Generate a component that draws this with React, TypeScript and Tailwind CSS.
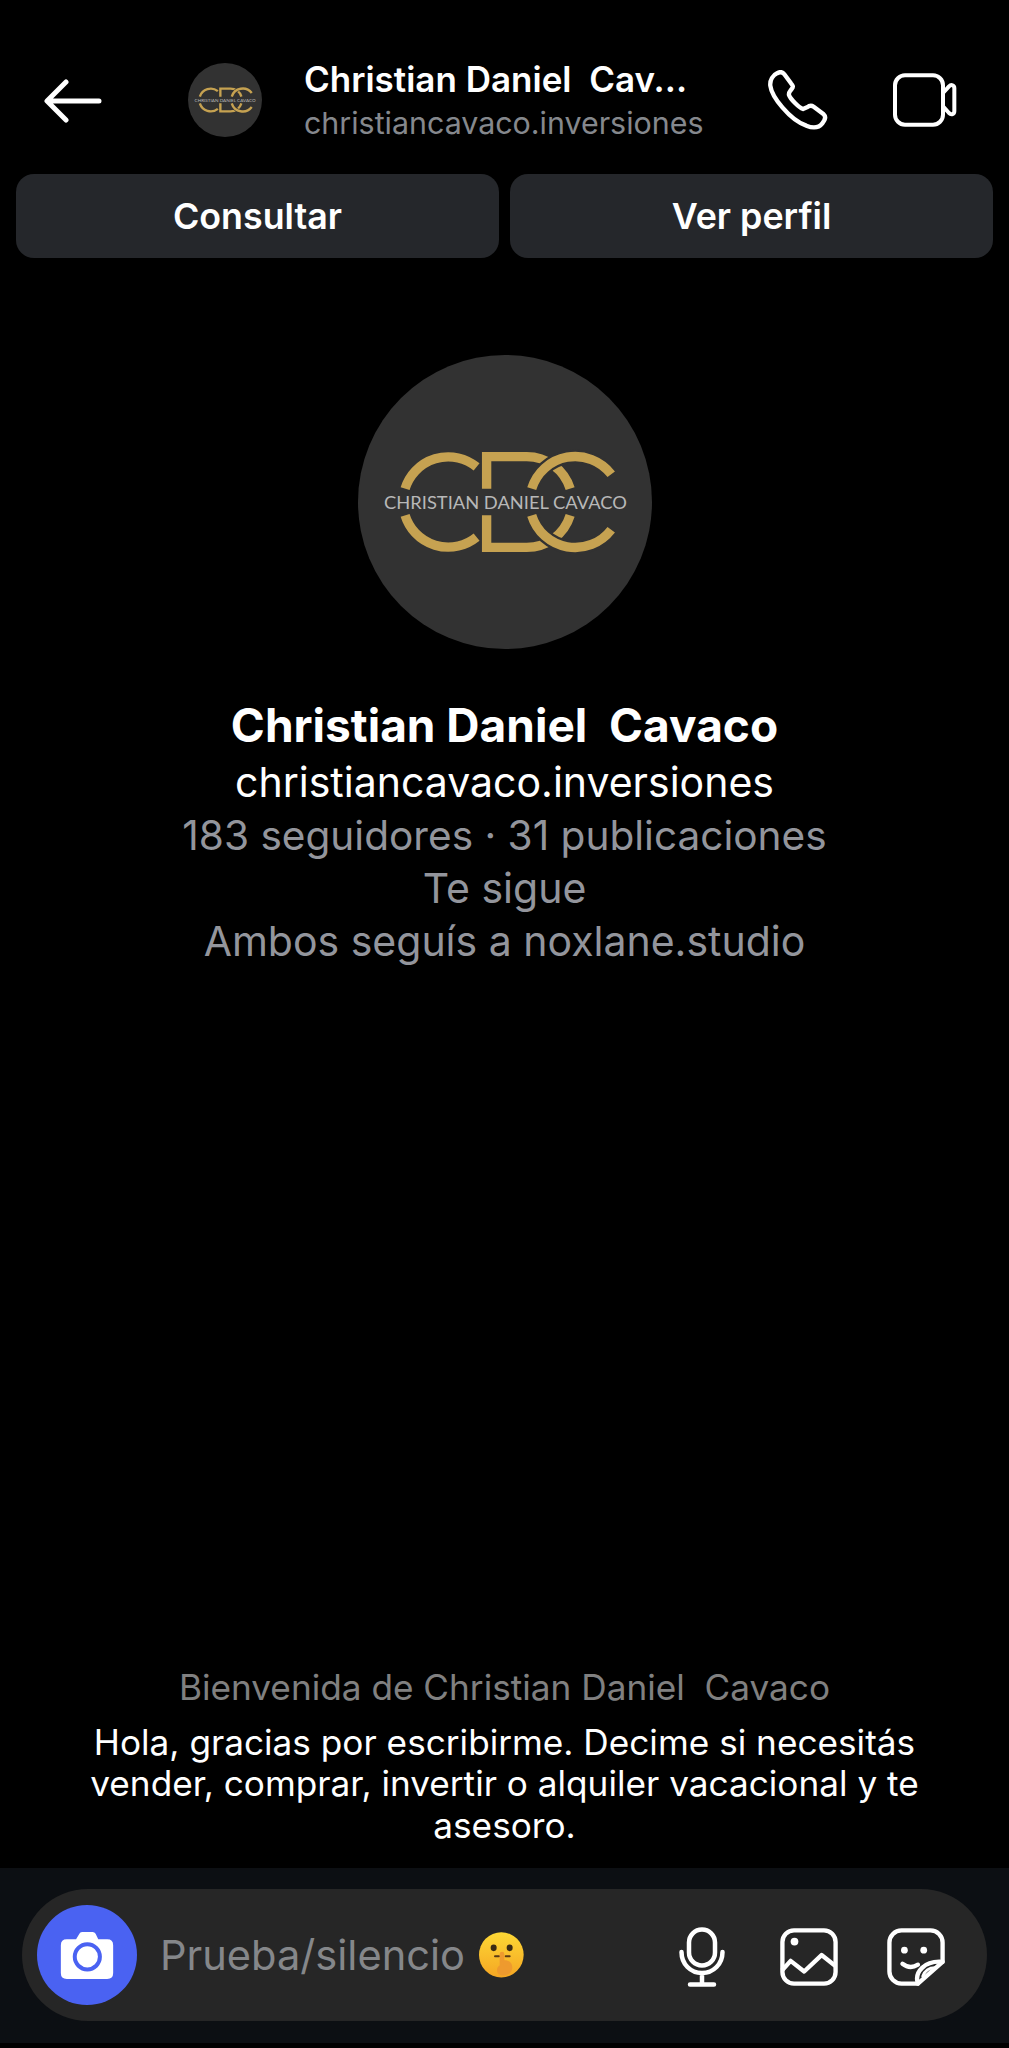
const Logo = ({ className }: { className: string }) => (
  <svg viewBox="50 45 880 880" className={className}>
    <circle cx="490" cy="485" r="440" fill="#323232" />
    <g fill="none" stroke="#c6a251" strokeWidth="28">
      <path d="M191 445A135 135 0 0 1 405 380M191 525A135 135 0 0 0 405 590" />
      <path d="M435 445V349H555A136 136 0 0 1 685 445M435 525V621H555A136 136 0 0 0 685 525" />
      <path d="M570 445A136 136 0 0 1 808 402M570 525A136 136 0 0 0 808 568" stroke="#323232" strokeWidth="42" />
      <path d="M570 445A136 136 0 0 1 808 402M570 525A136 136 0 0 0 808 568" />
    </g>
    <text x="128" y="505" fill="#b8b8b8" fontSize="53" textLength="727" lengthAdjust="spacingAndGlyphs" fontFamily="Lato, sans-serif">CHRISTIAN DANIEL CAVACO</text>
  </svg>
)

export default function App() {
  return (
    <div className="flex h-[2048px] flex-col bg-black font-['Inter',sans-serif] text-white">
      <header className="flex h-[174px] items-start pl-[44px] pt-[63px]">
        <svg viewBox="0 0 58 44" className="mt-[16px] h-[44px] w-[58px]" fill="none" stroke="white" strokeWidth="5" strokeLinecap="round" strokeLinejoin="round">
          <path d="M55 22H4M22 3 3 22l19 19" />
        </svg>
        <Logo className="ml-[86px] h-[74px] w-[74px]" />
        <div className="-mt-[4px] ml-[42px] w-[400px]">
          <div className="whitespace-pre text-[35px] leading-[40px] font-semibold">Christian Daniel  Cav...</div>
          <div className="mt-[5px] whitespace-pre text-[30.4px] leading-[38px] text-[#85888d]">christiancavaco.inversiones</div>
        </div>
        <svg viewBox="55 45 180 180" className="mt-[7px] ml-[64px] h-[60px] w-[60px]" fill="none" stroke="white" strokeWidth="13" strokeLinejoin="round">
          <path d="M82 55C70 60 60 75 62 92C66 125 120 195 170 212C190 220 208 218 218 205C226 195 230 185 222 178L192 155C185 150 178 152 172 157L160 162C148 158 122 132 118 120C116 112 122 108 126 102C132 95 130 92 124 85L104 58C98 50 90 50 82 55Z" />
        </svg>
        <svg viewBox="425 52 195 165" className="mt-[9px] ml-[64px] h-[55px] w-[65px]" fill="none" stroke="white" strokeWidth="12" strokeLinejoin="round">
          <rect x="434" y="62" width="144" height="148" rx="30" />
          <path d="M578 115L596 95C603 88 612 92 612 100V170C612 178 603 182 596 175L578 155" />
        </svg>
      </header>

      <div className="flex gap-[11px] pl-[16px] pr-[16px]">
        <button className="h-[84px] flex-1 rounded-[18px] bg-[#25272b] pt-[2px] text-[35.8px] font-semibold">Consultar</button>
        <button className="h-[84px] flex-1 rounded-[18px] bg-[#25272b] pt-[2px] text-[35.8px] font-semibold">Ver perfil</button>
      </div>

      <main className="flex flex-1 flex-col items-center text-center">
        <Logo className="mt-[97px] h-[294px] w-[294px]" />
        <h1 className="mt-[46px] whitespace-pre text-[46px] leading-[61px] font-bold">Christian Daniel  Cavaco</h1>
        <p className="text-[41px] leading-[53px]">christiancavaco.inversiones</p>
        <p className="text-[40.6px] leading-[53px] text-[#93959c]">183 seguidores · 31 publicaciones</p>
        <p className="text-[41px] leading-[53px] text-[#93959c]">Te sigue</p>
        <p className="text-[41px] leading-[53px] text-[#93959c]">Ambos seguís a noxlane.studio</p>
        <div className="mt-auto mb-[22px] w-full px-[80px]">
          <p className="whitespace-pre text-[35.2px] leading-[40px] text-[#808080]">Bienvenida de Christian Daniel  Cavaco</p>
          <p className="mt-[15px] text-[35.2px] leading-[41.5px]">Hola, gracias por escribirme. Decime si necesitás vender, comprar, invertir o alquiler vacacional y te asesoro.</p>
        </div>
      </main>

      <footer className="mb-[5px] h-[175px] bg-[#0c0f13] pl-[22px] pr-[22px] pt-[21px]">
        <div className="flex h-[132px] items-center rounded-full bg-[#262626] pl-[15px]">
          <div className="flex h-[100px] w-[100px] items-center justify-center rounded-full bg-[#4a62f2]">
            <svg viewBox="90 100 162 148" className="h-[49px] w-[54px]">
              <path d="M110 125H138L148 108Q150 103 156 103H188Q194 103 197 108L205 125H232Q250 125 250 143V227Q250 245 232 245H110Q92 245 92 227V143Q92 125 110 125Z" fill="white" />
              <circle cx="172" cy="178" r="38" fill="white" stroke="#4a62f2" strokeWidth="12" />
            </svg>
          </div>
          <span className="ml-[23px] text-[41.6px] text-[#85878a]">Prueba/silencio</span>
          <svg viewBox="38 28 135 137" className="ml-[14px] h-[46px] w-[45px]">
            <defs>
              <linearGradient id="face" x1="0" y1="0" x2="0" y2="1">
                <stop offset="0" stopColor="#fdd835" />
                <stop offset="1" stopColor="#f5a623" />
              </linearGradient>
            </defs>
            <ellipse cx="105" cy="96" rx="67" ry="68" fill="url(#face)" />
            <ellipse cx="82" cy="75" rx="9" ry="10" fill="#3a2a14" />
            <ellipse cx="130" cy="75" rx="9" ry="10" fill="#3a2a14" />
            <path d="M86 100h12M118 100h12" stroke="#5a3a14" strokeWidth="6" strokeLinecap="round" />
            <path d="M100 128V94a7 7 0 0 1 14 0v18c14 0 24 8 24 22 0 14-12 24-26 24-12 0-20-6-20-16 0-6 3-12 8-14Z" fill="#ee9a2e" />
          </svg>
          <svg viewBox="0 0 46 60" className="mt-[4px] ml-auto h-[60px] w-[46px]" fill="none" stroke="white" strokeWidth="4.5" strokeLinecap="round">
            <rect x="10" y="2.500" width="26" height="36" rx="13" />
            <path d="M2.500 25c0 12 9 21 20.500 21s20.500-9 20.500-21M23 46v11M11 57.500h24" />
          </svg>
          <svg viewBox="0 0 60 60" className="mt-[4px] ml-[55px] h-[58px] w-[58px]" fill="none" stroke="white" strokeWidth="4.500" strokeLinejoin="round">
            <rect x="2.500" y="2.500" width="55" height="55" rx="12" />
            <circle cx="15" cy="14" r="4" fill="white" stroke="none" />
            <path d="M2 44l9-10 14 11 18-17 14 11" />
          </svg>
          <svg viewBox="0 0 60 60" className="mt-[4px] mr-[42px] ml-[49px] h-[58px] w-[58px]" fill="none" stroke="white" strokeWidth="4.500" strokeLinecap="round" strokeLinejoin="round">
            <path d="M32 57.500H15A12.500 12.500 0 0 1 2.500 45V15A12.500 12.500 0 0 1 15 2.500h30A12.500 12.500 0 0 1 57.500 15v20Z" />
            <path d="M32 57.500c-4-12 7-24 25.500-22.500" />
            <path d="M37 50c2-6 7-9 13-9" strokeWidth="3" />
            <path d="M16 37c5 4 11 4 16 1" />
            <circle cx="18" cy="23" r="3.500" fill="white" stroke="none" />
            <circle cx="38" cy="23" r="3.500" fill="white" stroke="none" />
          </svg>
        </div>
      </footer>
    </div>
  )
}
